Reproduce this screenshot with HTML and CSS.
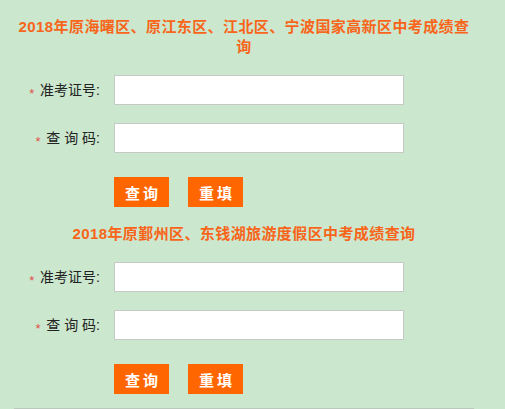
FILE: index.html
```html
<!DOCTYPE html>
<html>
<head>
  <meta charset="utf-8">
  <title>中考成绩查询</title>
  <link rel="stylesheet" href="styles.css">
</head>
<body>

  <div class="page">

    <div class="block">
      <h3 class="title">2018年原海曙区、原江东区、江北区、宁波国家高新区中考成绩查询</h3>
      <div class="form">
        <div class="row">
          <label class="label"><span class="star">*</span> 准考证号:</label>
          <input type="text" class="field">
        </div>
        <div class="row">
          <label class="label"><span class="star">*</span> 查 询 码:</label>
          <input type="text" class="field">
        </div>
        <div class="btns">
          <button class="btn">查询</button>
          <button class="btn">重填</button>
        </div>
      </div>
    </div>

    <div class="block">
      <h3 class="title">2018年原鄞州区、东钱湖旅游度假区中考成绩查询</h3>
      <div class="form">
        <div class="row">
          <label class="label"><span class="star">*</span> 准考证号:</label>
          <input type="text" class="field">
        </div>
        <div class="row">
          <label class="label"><span class="star">*</span> 查 询 码:</label>
          <input type="text" class="field">
        </div>
        <div class="btns">
          <button class="btn">查询</button>
          <button class="btn">重填</button>
        </div>
      </div>
    </div>

  </div>

</body>
</html>
```

FILE: styles.css
```css
body {
  margin: 0;
  background: #cbe7cd;
  font-family: "Liberation Sans", "Noto Sans CJK SC", sans-serif;
  color: #333;
}

.page {
  width: 460px;
  margin-left: 14px;
  padding-top: 17px;
  padding-bottom: 14px;
  border-bottom: 1px solid #b9c9bb;
}

.block + .block {
  margin-top: 17px;
}

.title {
  margin: 0;
  font-size: 15px;
  line-height: 20px;
  font-weight: bold;
  letter-spacing: 0.4px;
  color: #f8651a;
  text-align: center;
}

.form {
  margin-top: 18px;
}

.row {
  display: flex;
  align-items: center;
  margin-bottom: 18px;
}

.label {
  width: 86px;
  padding-right: 14px;
  text-align: right;
  font-size: 14px;
  color: #222;
}

.star {
  color: #e0504a;
  font-size: 13px;
  vertical-align: -3px;
  margin-right: 2px;
}

.field {
  width: 290px;
  height: 30px;
  box-sizing: border-box;
  margin: 0;
  padding: 0 6px;
  border: 1px solid #c6cac6;
  background: #fff;
  font-size: 14px;
}

.btns {
  display: flex;
  gap: 19px;
  margin-left: 100px;
  padding-top: 6px;
}

.btn {
  width: 55px;
  height: 30px;
  padding: 0 0 0 3px;
  border: none;
  background: #ff6600;
  color: #fff;
  font-family: "Liberation Sans", "Noto Sans CJK SC", sans-serif;
  font-size: 15px;
  font-weight: bold;
  letter-spacing: 3px;
  cursor: pointer;
}
```
